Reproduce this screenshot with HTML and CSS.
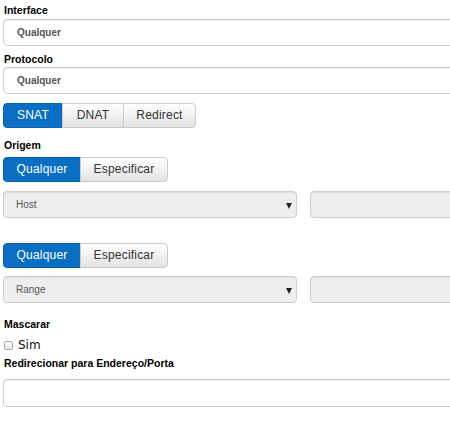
FILE: index.html
```html
<!DOCTYPE html>
<html>
<head>
<meta charset="utf-8">
<link rel="stylesheet" href="styles.css">
</head>
<body>
<div class="page">
  <label class="lbl lbl-first">Interface</label>
  <div class="field field-value">Qualquer</div>

  <label class="lbl lbl-proto">Protocolo</label>
  <div class="field field-value field-proto">Qualquer</div>

  <div class="btn-group group-nat">
    <span class="btn active btn-snat">SNAT</span>
    <span class="btn btn-dnat">DNAT</span>
    <span class="btn btn-redirect">Redirect</span>
  </div>

  <label class="lbl lbl-origem">Origem</label>
  <div class="btn-group group-origem">
    <span class="btn active btn-q">Qualquer</span>
    <span class="btn btn-e">Especificar</span>
  </div>

  <div class="row row-host">
    <div class="select disabled">Host<span class="caret"></span></div>
    <div class="field disabled"></div>
  </div>

  <div class="btn-group group-dest">
    <span class="btn active btn-q">Qualquer</span>
    <span class="btn btn-e">Especificar</span>
  </div>

  <div class="row row-range">
    <div class="select disabled">Range<span class="caret"></span></div>
    <div class="field disabled"></div>
  </div>

  <label class="lbl lbl-masc">Mascarar</label>
  <div class="check"><span class="box"></span><span class="check-text">Sim</span></div>

  <label class="lbl lbl-redir">Redirecionar para Endereço/Porta</label>
  <div class="field field-redir"></div>
</div>
</body>
</html>
```
FILE: styles.css
```css
html, body {
  margin: 0;
  padding: 0;
  background: #fff;
  overflow: hidden;
}
.page {
  width: 601px;
  padding: 3px 0 0 3px;
  font-family: "Liberation Sans", Arial, sans-serif;
  color: #000;
}
.lbl {
  display: block;
  font-weight: bold;
  font-size: 10.5px;
  line-height: 14px;
  height: 14px;
  padding-left: 1px;
}
.lbl-first { margin-bottom: 2px; }
.lbl-proto { margin-top: 6px; margin-bottom: 1px; }
.lbl-origem { margin-top: 10px; margin-bottom: 5px; }
.lbl-masc { margin-top: 14px; }
.lbl-redir { margin-top: 3px; margin-bottom: 9px; }

.field {
  box-sizing: border-box;
  height: 27px;
  border: 1px solid #ccc;
  border-radius: 4px;
  background: #fff;
  box-shadow: inset 0 1px 1px rgba(0,0,0,0.075);
}
.field-value {
  font-size: 10px;
  font-weight: bold;
  color: #555;
  line-height: 25px;
  padding-left: 13px;
}
.field-redir { height: 28px; }

.btn-group {
  display: flex;
  width: max-content;
}
.group-nat { margin-top: 9px; }
.group-dest { margin-top: 25px; }

.btn {
  box-sizing: border-box;
  display: block;
  height: 25px;
  line-height: 23px;
  font-size: 12px;
  letter-spacing: 0.2px;
  color: #333;
  text-align: center;
  border: 1px solid #ccc;
  background: linear-gradient(#fff, #e2e2e2);
  margin-left: -1px;
}
.btn:first-child { margin-left: 0; border-radius: 4px 0 0 4px; }
.btn:last-child { border-radius: 0 4px 4px 0; }
.btn.active {
  background: #0a6fc2;
  border-color: #0862ad;
  color: #fff;
}
.btn-snat { width: 60px; }
.btn-dnat { width: 62px; }
.btn-redirect { width: 73px; }
.btn-q { width: 78px; }
.btn-e { width: 88px; }

.row {
  display: grid;
  grid-template-columns: 1fr 1fr;
  column-gap: 13px;
  margin-top: 9px;
}
.row-range { margin-top: 8px; }
.select {
  position: relative;
  box-sizing: border-box;
  height: 27px;
  border: 1px solid #ccc;
  border-radius: 4px;
  font-size: 10px;
  color: #555;
  line-height: 25px;
  padding-left: 12px;
}
.disabled {
  background: #eee;
  box-shadow: inset 0 1px 1px rgba(0,0,0,0.075);
}
.caret {
  position: absolute;
  right: 4px;
  top: 11px;
  width: 0;
  height: 0;
  border-left: 3px solid transparent;
  border-right: 3px solid transparent;
  border-top: 6px solid #222;
}

.check {
  display: flex;
  align-items: center;
  height: 16px;
  margin-top: 6px;
  padding-left: 1px;
}
.box {
  box-sizing: border-box;
  width: 9px;
  height: 9px;
  border: 1px solid #aaa;
  border-radius: 2px;
  background: linear-gradient(#fff, #e6e6e6);
}
.check-text {
  font-family: "DejaVu Sans", sans-serif;
  font-size: 12px;
  margin-left: 5px;
  color: #111;
}
```
